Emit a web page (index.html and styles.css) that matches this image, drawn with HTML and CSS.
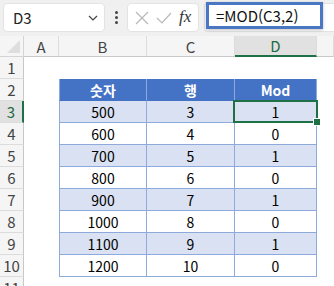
FILE: index.html
```html
<!DOCTYPE html>
<html lang="ko">
<head>
  <meta charset="UTF-8" />
  <title>MOD</title>
  <link rel="stylesheet" href="styles.css">
</head>
<body>
  <div class="toolbar">
    <div class="namebox">
      <span>D3</span>
      <svg class="chev" width="10" height="6" viewBox="0 0 10 6"><path d="M1 1 L5 5 L9 1" fill="none" stroke="#444" stroke-width="1.2"/></svg>
    </div>
    <div class="dots"><i></i><i></i><i></i></div>
    <div class="fxbox">
      <svg width="14" height="14" viewBox="0 0 14 14"><path d="M1 1 L13 13 M13 1 L1 13" stroke="#b8b8b8" stroke-width="1.2"/></svg>
      <svg width="16" height="14" viewBox="0 0 16 14"><path d="M1 7 L6 12 L15 2" fill="none" stroke="#b8b8b8" stroke-width="1.2"/></svg>
      <span class="fx">fx</span>
    </div>
    <div class="formula">
      <div class="highlight">=MOD(C3,2)</div>
    </div>
  </div>

  <div class="sheet">
    <div class="corner"></div>
    <div class="colh">A</div>
    <div class="colh">B</div>
    <div class="colh">C</div>
    <div class="colh active">D</div>
    <div class="colh"></div>

    <div class="rowh">1</div>
    <div></div><div></div><div></div><div></div><div></div>

    <div class="rowh">2</div>
    <div></div>
    <div class="t head first">숫자</div>
    <div class="t head">행</div>
    <div class="t head bold">Mod</div>
    <div></div>

    <div class="rowh active">3</div>
    <div></div>
    <div class="t band first">500</div>
    <div class="t band">3</div>
    <div class="t band sel">1</div>
    <div></div>

    <div class="rowh">4</div>
    <div></div>
    <div class="t first">600</div>
    <div class="t">4</div>
    <div class="t">0</div>
    <div></div>

    <div class="rowh">5</div>
    <div></div>
    <div class="t band first">700</div>
    <div class="t band">5</div>
    <div class="t band">1</div>
    <div></div>

    <div class="rowh">6</div>
    <div></div>
    <div class="t first">800</div>
    <div class="t">6</div>
    <div class="t">0</div>
    <div></div>

    <div class="rowh">7</div>
    <div></div>
    <div class="t band first">900</div>
    <div class="t band">7</div>
    <div class="t band">1</div>
    <div></div>

    <div class="rowh">8</div>
    <div></div>
    <div class="t first">1000</div>
    <div class="t">8</div>
    <div class="t">0</div>
    <div></div>

    <div class="rowh">9</div>
    <div></div>
    <div class="t band first">1100</div>
    <div class="t band">9</div>
    <div class="t band">1</div>
    <div></div>

    <div class="rowh">10</div>
    <div></div>
    <div class="t first">1200</div>
    <div class="t">10</div>
    <div class="t">0</div>
    <div></div>

    <div class="rowh">11</div>
    <div></div><div></div><div></div><div></div><div></div>
  </div>
</body>
</html>
```

FILE: styles.css
```css
* {
  margin: 0;
  padding: 0;
  box-sizing: border-box;
}

body {
  width: 334px;
  height: 286px;
  overflow: hidden;
  background: #fff;
  font-family: 'Noto Sans CJK KR', 'Noto Sans', sans-serif;
  font-size: 14px;
  color: #000;
}

/* top bar */
.toolbar {
  height: 36px;
  background: #f0f0f0;
  display: flex;
  align-items: flex-start;
  padding: 3px 0 0 3px;
}

.namebox {
  width: 102px;
  height: 29px;
  background: #fff;
  border: 1px solid #e3e3e3;
  border-radius: 4px;
  display: flex;
  align-items: center;
  justify-content: space-between;
  padding: 0 6px 0 9px;
  font-size: 15px;
  color: #222;
}

.dots {
  width: 22px;
  height: 29px;
  display: flex;
  flex-direction: column;
  align-items: center;
  justify-content: center;
  gap: 2px;
}

.dots i {
  width: 3px;
  height: 3px;
  border-radius: 50%;
  background: #444;
}

.fxbox {
  width: 72px;
  height: 29px;
  background: #fff;
  border: 1px solid #e3e3e3;
  border-radius: 4px;
  display: flex;
  align-items: center;
  gap: 7px;
  padding-left: 7px;
}

.fx {
  font-family: 'Liberation Serif', serif;
  font-style: italic;
  font-size: 17px;
  color: #333;
  margin-top: -2px;
}

.formula {
  flex: 1;
  height: 29px;
  margin-left: 5px;
  background: #fff;
  border: 1px solid #e3e3e3;
  border-right: none;
  border-radius: 4px 0 0 4px;
  position: relative;
}

.highlight {
  position: absolute;
  left: 1px;
  top: -2px;
  width: 117px;
  height: 27px;
  border: 3px solid #4a77c4;
  padding-left: 7px;
  font-size: 15px;
  line-height: 21px;
  color: #111;
  box-shadow: 0 1px 3px rgba(0, 0, 0, 0.25);
}

/* sheet grid */
.sheet {
  display: grid;
  grid-template-columns: 24px 35px 88px 88px 82px 1fr;
  grid-template-rows: 21px repeat(11, 22px);
}

.sheet > div {
  display: flex;
  align-items: center;
  justify-content: center;
}

.corner {
  background: #f5f5f5;
  border-right: 1px solid #d4d4d4;
  border-bottom: 1px solid #d4d4d4;
  position: relative;
}

.corner::after {
  content: "";
  position: absolute;
  right: 3px;
  bottom: 3px;
  border-left: 13px solid transparent;
  border-bottom: 13px solid #dedede;
}

.colh {
  background: #f5f5f5;
  border-right: 1px solid #dcdcdc;
  border-bottom: 1px solid #c8c8c8;
  color: #444;
  font-size: 15px;
}

.colh.active {
  background: #e1e1e1;
  color: #1e6b41;
  border-bottom: 2px solid #1e7145;
}

.rowh {
  background: #f5f5f5;
  border-right: 1px solid #c8c8c8;
  border-bottom: 1px solid #dcdcdc;
  color: #444;
  font-size: 15px;
}

.rowh.active {
  background: #e1e1e1;
  color: #1e6b41;
  border-right: 2px solid #1e7145;
}

/* table */
.t {
  border-right: 1px solid #8ea9db;
  border-bottom: 1px solid #8ea9db;
}

.t.first {
  border-left: 1px solid #8ea9db;
}

.t.head {
  background: #4472c4;
  color: #fff;
  font-weight: bold;
  border-bottom-color: #4472c4;
}

.t.band {
  background: #d9e1f2;
}

.sel {
  position: relative;
}

.sel::before {
  content: "";
  position: absolute;
  left: -2px;
  top: -1px;
  right: -2px;
  bottom: -1px;
  border: 2px solid #1e7145;
}

.sel::after {
  content: "";
  position: absolute;
  right: -5px;
  bottom: -4px;
  width: 6px;
  height: 6px;
  background: #1e7145;
  border: 1px solid #fff;
}
```
